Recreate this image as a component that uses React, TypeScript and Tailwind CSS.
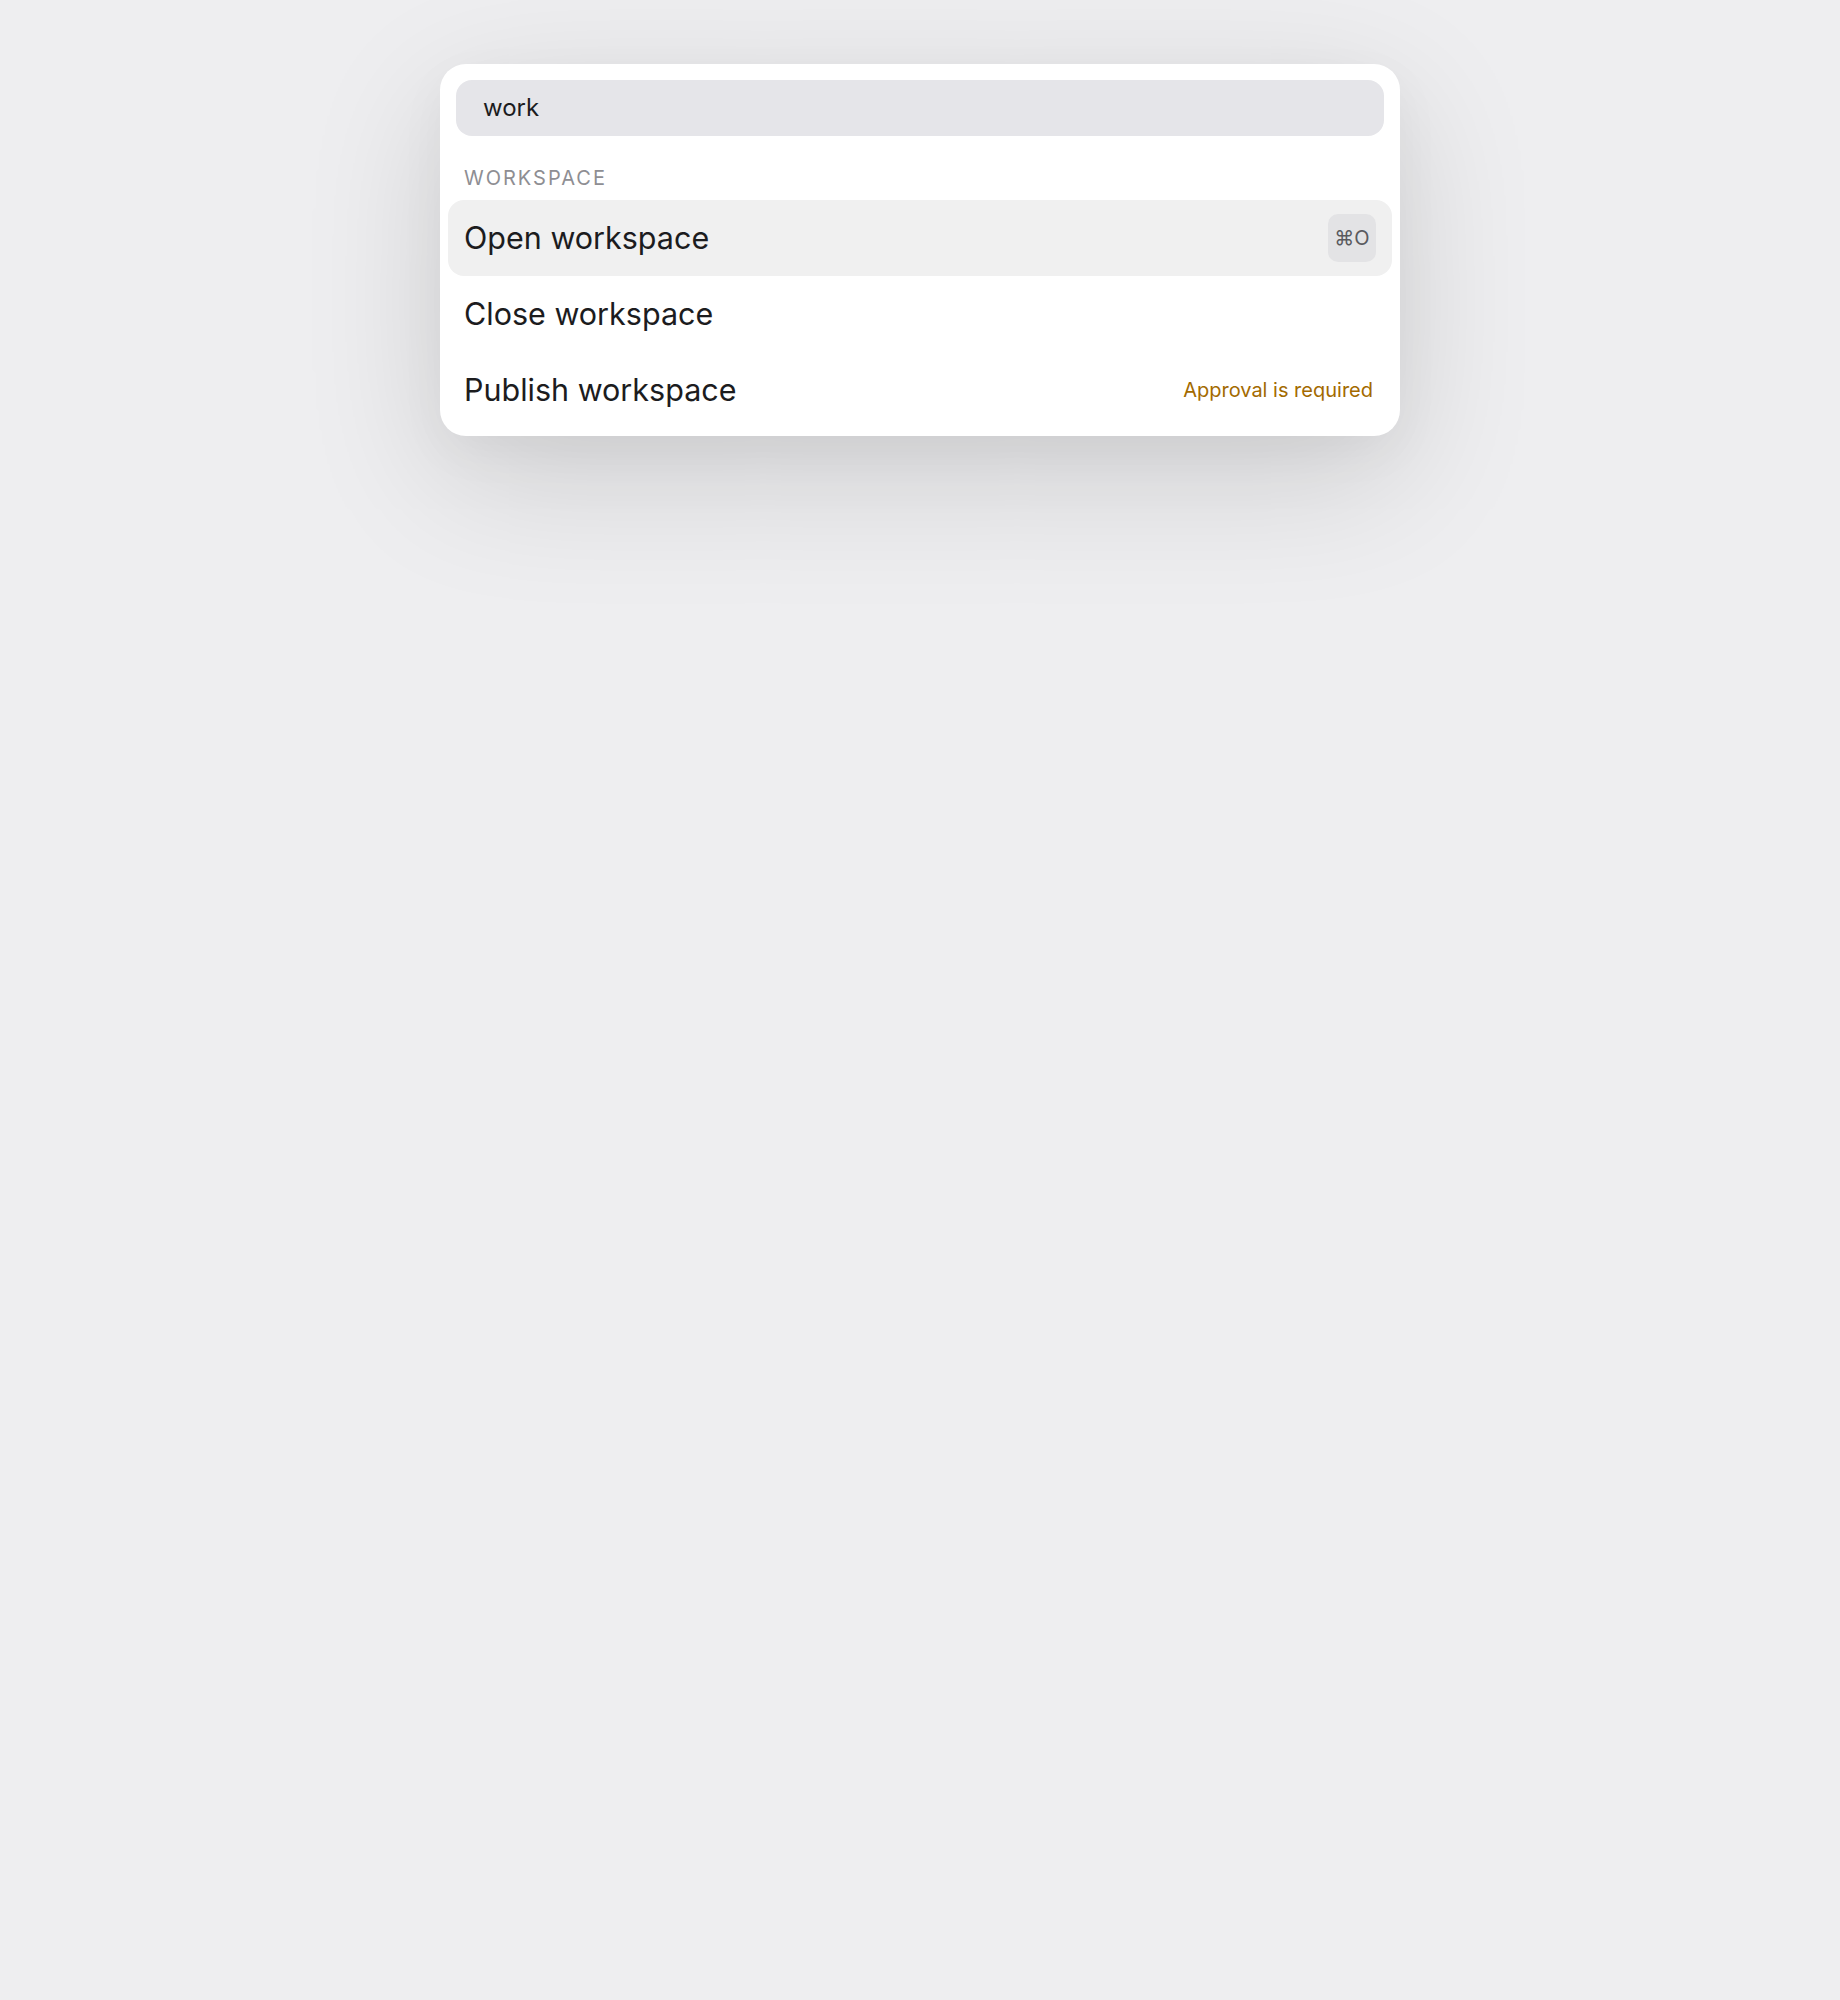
import React from "react";

const items = [
  { label: "Open workspace", active: true, shortcut: "⌘O" },
  { label: "Close workspace" },
  { label: "Publish workspace", note: "Approval is required" },
];

export default function App() {
  return (
    <div className="min-h-[2000px] w-full bg-[#eeeef0] font-['Inter','Liberation_Sans',sans-serif]">
      <div className="flex justify-center pt-16">
        <div className="w-[960px] rounded-[26px] bg-white p-2 shadow-[0_40px_140px_rgba(0,0,0,0.14),0_16px_50px_rgba(0,0,0,0.04)]">
          <div className="mx-2 mt-2 flex h-14 items-center rounded-2xl bg-[#e5e5e9] px-[27px] text-[24px] text-[#1c1c1e]">
            work
          </div>

          <div className="mt-[30px] mb-[10px] px-4 text-[20px] leading-6 tracking-[0.1em] text-[#8e8e93]">
            WORKSPACE
          </div>

          <div className="flex flex-col">
            {items.map((item) => (
              <div
                key={item.label}
                className={
                  "flex h-[76px] items-center justify-between rounded-2xl pl-4 pr-4 " +
                  (item.active ? "bg-[#f0f0f0]" : "")
                }
              >
                <span className="text-[30.5px] text-[#1c1c1e]">{item.label}</span>
                {item.shortcut && (
                  <span className="flex h-12 w-12 items-center justify-center rounded-[10px] bg-[#e3e3e5] text-[20px] text-[#5a5a5e]">
                    {item.shortcut}
                  </span>
                )}
                {item.note && (
                  <span className="pr-[3px] text-[20px] text-[#a36a00]">{item.note}</span>
                )}
              </div>
            ))}
          </div>
        </div>
      </div>
    </div>
  );
}
